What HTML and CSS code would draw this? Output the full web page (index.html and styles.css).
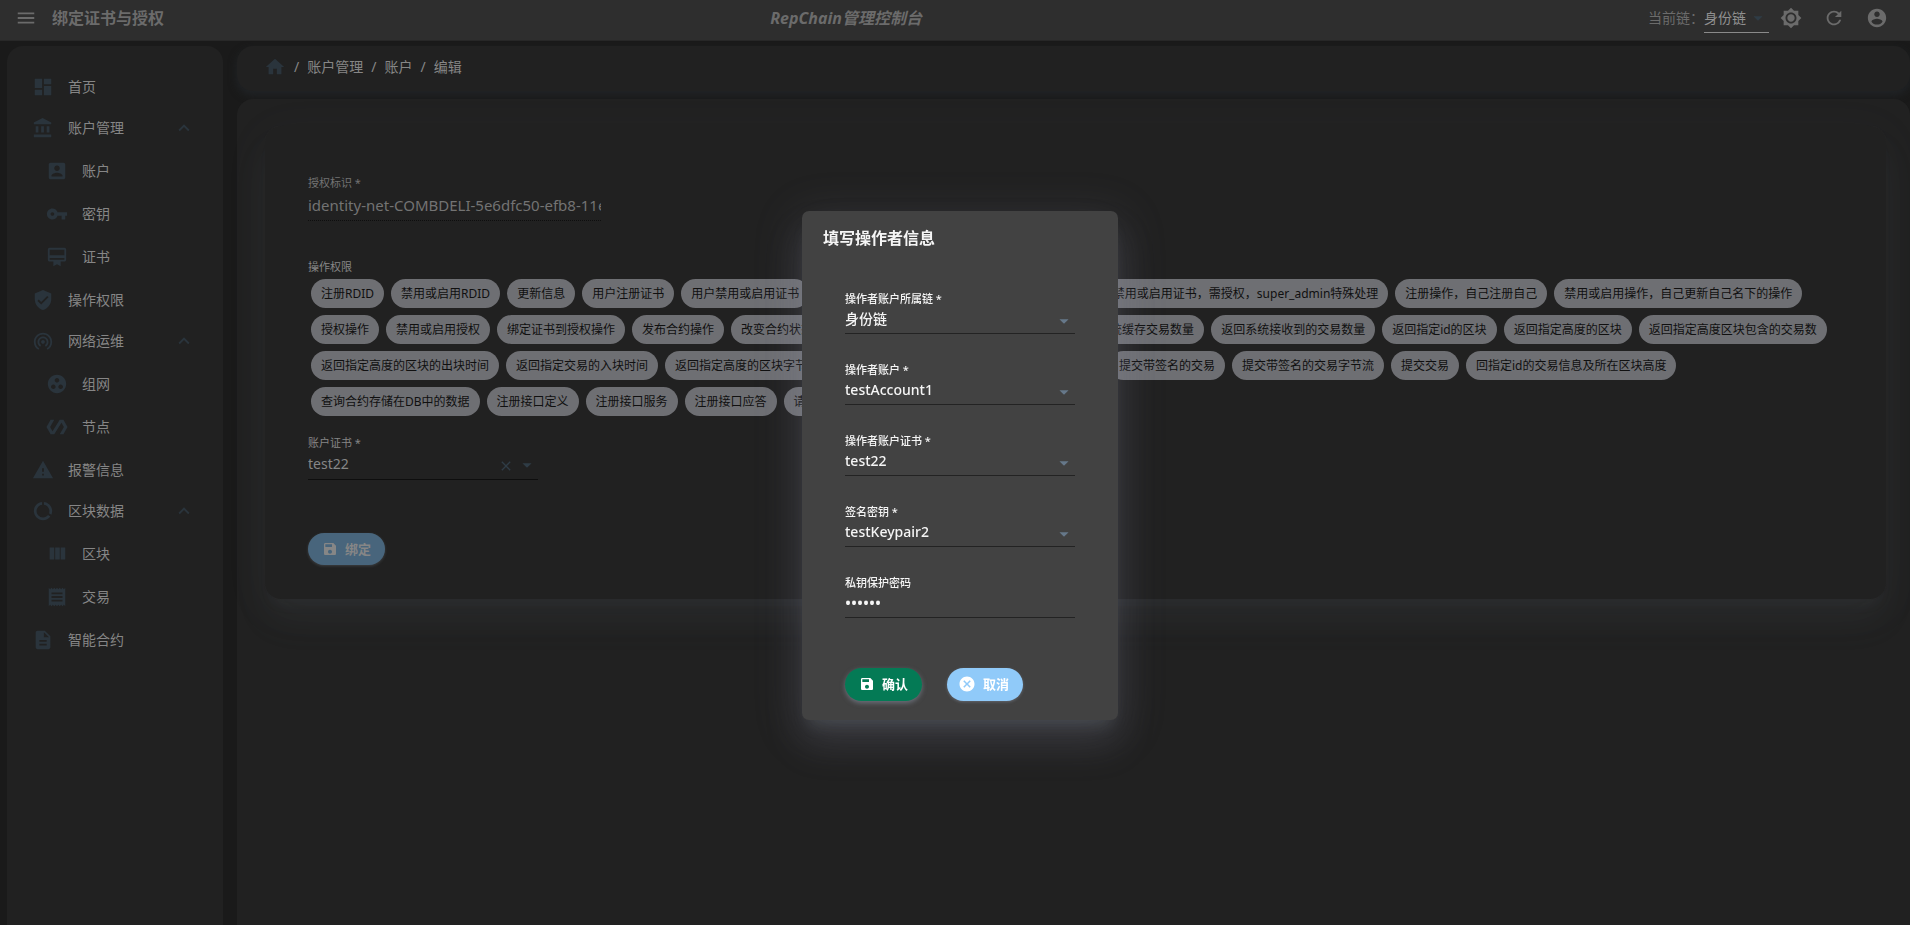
FILE: index.html
```html
<!DOCTYPE html>
<html lang="zh-CN">
<head>
<meta charset="utf-8">
<title>RepChain管理控制台</title>
<link rel="stylesheet" href="styles.css">
</head>
<body>
<svg class="sprite" aria-hidden="true">
  <symbol id="menu" viewBox="0 0 24 24"><path d="M3 18h18v-2H3v2zm0-5h18v-2H3v2zm0-7v2h18V6H3z"/></symbol>
  <symbol id="dashboard" viewBox="0 0 24 24"><path d="M3 13h8V3H3v10zm0 8h8v-6H3v6zm10 0h8V11h-8v10zm0-18v6h8V3h-8z"/></symbol>
  <symbol id="bank" viewBox="0 0 24 24"><path d="M4 10v7h3v-7H4zm6 0v7h3v-7h-3zM2 22h19v-3H2v3zm14-12v7h3v-7h-3zm-4.500-9L2 6v2h19V6l-9.500-5z"/></symbol>
  <symbol id="account-box" viewBox="0 0 24 24"><path d="M3 5v14c0 1.100.890 2 2 2h14c1.100 0 2-.900 2-2V5c0-1.100-.900-2-2-2H5c-1.110 0-2 .900-2 2zm12 4c0 1.660-1.340 3-3 3s-3-1.340-3-3 1.340-3 3-3 3 1.340 3 3zm-9 8c0-2 4-3.100 6-3.100s6 1.100 6 3.100v1H6v-1z"/></symbol>
  <symbol id="key" viewBox="0 0 24 24"><path d="M12.650 10C11.830 7.670 9.610 6 7 6c-3.310 0-6 2.690-6 6s2.690 6 6 6c2.610 0 4.830-1.670 5.650-4H17v4h4v-4h2v-4H12.650zM7 14c-1.100 0-2-.900-2-2s.900-2 2-2 2 .900 2 2-.900 2-2 2z"/></symbol>
  <symbol id="membership" viewBox="0 0 24 24"><path d="M20 2H4c-1.110 0-2 .890-2 2v11c0 1.110.890 2 2 2h4v5l4-2 4 2v-5h4c1.110 0 2-.890 2-2V4c0-1.110-.890-2-2-2zm0 13H4v-2h16v2zm0-5H4V4h16v6z"/></symbol>
  <symbol id="shield" viewBox="0 0 24 24"><path d="M12 1L3 5v6c0 5.550 3.840 10.740 9 12 5.160-1.260 9-6.450 9-12V5l-9-4zm-2 16l-4-4 1.410-1.410L10 14.170l6.590-6.590L18 9l-8 8z"/></symbol>
  <symbol id="tethering" viewBox="0 0 24 24"><path d="M12 11c-1.100 0-2 .900-2 2s.900 2 2 2 2-.900 2-2-.900-2-2-2zm6 2c0-3.310-2.690-6-6-6s-6 2.690-6 6c0 2.220 1.210 4.150 3 5.190l1-1.740c-1.190-.700-2-1.970-2-3.450 0-2.210 1.790-4 4-4s4 1.790 4 4c0 1.480-.810 2.750-2 3.450l1 1.740c1.790-1.040 3-2.970 3-5.190zM12 3C6.480 3 2 7.480 2 13c0 3.700 2.010 6.920 4.990 8.650l1-1.730C5.610 18.530 4 15.960 4 13c0-4.420 3.580-8 8-8s8 3.580 8 8c0 2.960-1.610 5.530-4 6.920l1 1.730c2.990-1.730 5-4.950 5-8.650 0-5.520-4.480-10-10-10z"/></symbol>
  <symbol id="group-work" viewBox="0 0 24 24"><path d="M12 2C6.480 2 2 6.480 2 12s4.480 10 10 10 10-4.480 10-10S17.520 2 12 2zM8 17.500c-1.380 0-2.500-1.120-2.500-2.500s1.120-2.500 2.500-2.500 2.500 1.120 2.500 2.500-1.120 2.500-2.500 2.500zM9.500 8c0-1.380 1.120-2.500 2.500-2.500s2.500 1.120 2.500 2.500-1.120 2.500-2.500 2.500S9.500 9.380 9.500 8zm6.500 9.500c-1.380 0-2.500-1.120-2.500-2.500s1.120-2.500 2.500-2.500 2.500 1.120 2.500 2.500-1.120 2.500-2.500 2.500z"/></symbol>
  <symbol id="polymer" viewBox="0 0 24 24"><path d="M19 4h-4L7.110 16.630 4.500 12 9 4H5L.500 12 5 20h4l7.890-12.630L19.500 12 15 20h4l4.500-8z"/></symbol>
  <symbol id="warning" viewBox="0 0 24 24"><path d="M1 21h22L12 2 1 21zm12-3h-2v-2h2v2zm0-4h-2v-4h2v4z"/></symbol>
  <symbol id="data-usage" viewBox="0 0 24 24"><path d="M13 2.050v3.030c3.390.490 6 3.390 6 6.920 0 .900-.180 1.750-.480 2.540l2.600 1.530c.560-1.240.880-2.620.880-4.070 0-5.180-3.950-9.450-9-9.950zM12 19c-3.870 0-7-3.130-7-7 0-3.530 2.610-6.430 6-6.920V2.050c-5.060.500-9 4.760-9 9.950 0 5.520 4.470 10 9.990 10 3.310 0 6.240-1.610 8.060-4.090l-2.600-1.530C16.170 17.980 14.210 19 12 19z"/></symbol>
  <symbol id="columns" viewBox="0 0 24 24"><path d="M10 18h5V5h-5v13zm-6 0h5V5H4v13zM16 5v13h5V5h-5z"/></symbol>
  <symbol id="receipt" viewBox="0 0 24 24"><path d="M18 17H6v-2h12v2zm0-4H6v-2h12v2zm0-4H6V7h12v2zM3 22l1.500-1.500L6 22l1.500-1.500L9 22l1.500-1.500L12 22l1.500-1.500L15 22l1.500-1.500L18 22l1.500-1.500L21 22V2l-1.500 1.500L18 2l-1.500 1.500L15 2l-1.500 1.500L12 2l-1.500 1.500L9 2 7.500 3.500 6 2 4.500 3.500 3 2v20z"/></symbol>
  <symbol id="description" viewBox="0 0 24 24"><path d="M14 2H6c-1.100 0-1.990.900-1.990 2L4 20c0 1.100.890 2 1.990 2H18c1.100 0 2-.900 2-2V8l-6-6zm2 16H8v-2h8v2zm0-4H8v-2h8v2zm-3-5V3.500L18.500 9H13z"/></symbol>
  <symbol id="expand-less" viewBox="0 0 24 24"><path d="M12 8l-6 6 1.410 1.410L12 10.830l4.590 4.580L18 14z"/></symbol>
  <symbol id="home" viewBox="0 0 24 24"><path d="M10 20v-6h4v6h5v-8h3L12 3 2 12h3v8z"/></symbol>
  <symbol id="drop-down" viewBox="0 0 24 24"><path d="M7 10l5 5 5-5z"/></symbol>
  <symbol id="brightness" viewBox="0 0 24 24"><path d="M20 8.690V4h-4.690L12 .690 8.690 4H4v4.690L.690 12 4 15.310V20h4.690L12 23.310 15.310 20H20v-4.690L23.310 12 20 8.690zM12 18c-3.310 0-6-2.690-6-6s2.690-6 6-6 6 2.690 6 6-2.690 6-6 6zm0-10c-2.210 0-4 1.790-4 4s1.790 4 4 4 4-1.790 4-4-1.790-4-4-4z"/></symbol>
  <symbol id="refresh" viewBox="0 0 24 24"><path d="M17.650 6.350C16.200 4.900 14.210 4 12 4c-4.420 0-7.990 3.580-7.990 8s3.570 8 7.990 8c3.730 0 6.840-2.550 7.730-6h-2.080c-.820 2.330-3.040 4-5.650 4-3.310 0-6-2.690-6-6s2.690-6 6-6c1.660 0 3.140.690 4.220 1.780L13 11h7V4l-2.350 2.350z"/></symbol>
  <symbol id="account-circle" viewBox="0 0 24 24"><path d="M12 2C6.480 2 2 6.480 2 12s4.480 10 10 10 10-4.480 10-10S17.520 2 12 2zm0 3c1.660 0 3 1.340 3 3s-1.340 3-3 3-3-1.340-3-3 1.340-3 3-3zm0 14.200c-2.500 0-4.710-1.280-6-3.220.030-1.990 4-3.080 6-3.080 1.990 0 5.970 1.090 6 3.080-1.290 1.940-3.500 3.220-6 3.220z"/></symbol>
  <symbol id="save" viewBox="0 0 24 24"><path d="M17 3H5c-1.110 0-2 .900-2 2v14c0 1.100.890 2 2 2h14c1.100 0 2-.900 2-2V7l-4-4zm-5 16c-1.660 0-3-1.340-3-3s1.340-3 3-3 3 1.340 3 3-1.340 3-3 3zm3-10H5V5h10v4z"/></symbol>
  <symbol id="cancel" viewBox="0 0 24 24"><path d="M12 2C6.470 2 2 6.470 2 12s4.470 10 10 10 10-4.470 10-10S17.530 2 12 2zm5 13.590L15.590 17 12 13.410 8.410 17 7 15.590 10.590 12 7 8.410 8.410 7 12 10.590 15.590 7 17 8.410 13.410 12 17 15.590z"/></symbol>
  <symbol id="close" viewBox="0 0 24 24"><path d="M19 6.410L17.590 5 12 10.590 6.410 5 5 6.410 10.590 12 5 17.590 6.410 19 12 13.410 17.590 19 19 17.590 13.410 12z"/></symbol>
</svg>

<div class="app">
  <header class="appbar">
    <div class="appbar-left">
      <button class="icon-button" type="button" aria-label="菜单"><svg class="icon"><use href="#menu"/></svg></button>
      <h1 class="page-title">绑定证书与授权</h1>
    </div>
    <div class="appbar-right">
      <em class="brand">RepChain管理控制台</em>
      <div class="appbar-tools">
        <div class="chain">
          <label class="chain-label" for="chain">当前链：</label>
          <div class="select-box chain-box">
            <select class="control chain-select" id="chain"><option>身份链</option></select>
            <svg class="icon arrow chain-arrow"><use href="#drop-down"/></svg>
          </div>
        </div>
        <button class="icon-button" type="button" aria-label="主题"><svg class="icon"><use href="#brightness"/></svg></button>
        <button class="icon-button" type="button" aria-label="刷新"><svg class="icon"><use href="#refresh"/></svg></button>
        <button class="icon-button" type="button" aria-label="用户"><svg class="icon"><use href="#account-circle"/></svg></button>
      </div>
    </div>
  </header>

  <div class="body">
    <nav class="sidebar" aria-label="主菜单">
      <a class="nav-item" href="#"><svg class="icon"><use href="#dashboard"/></svg>首页</a>
      <a class="nav-item nav-group" href="#"><svg class="icon"><use href="#bank"/></svg>账户管理<svg class="icon chevron"><use href="#expand-less"/></svg></a>
      <div class="nav-children">
        <a class="nav-item" href="#"><svg class="icon"><use href="#account-box"/></svg>账户</a>
        <a class="nav-item" href="#"><svg class="icon"><use href="#key"/></svg>密钥</a>
        <a class="nav-item" href="#"><svg class="icon"><use href="#membership"/></svg>证书</a>
      </div>
      <a class="nav-item" href="#"><svg class="icon"><use href="#shield"/></svg>操作权限</a>
      <a class="nav-item nav-group" href="#"><svg class="icon"><use href="#tethering"/></svg>网络运维<svg class="icon chevron"><use href="#expand-less"/></svg></a>
      <div class="nav-children">
        <a class="nav-item" href="#"><svg class="icon"><use href="#group-work"/></svg>组网</a>
        <a class="nav-item" href="#"><svg class="icon"><use href="#polymer"/></svg>节点</a>
      </div>
      <a class="nav-item" href="#"><svg class="icon"><use href="#warning"/></svg>报警信息</a>
      <a class="nav-item nav-group" href="#"><svg class="icon"><use href="#data-usage"/></svg>区块数据<svg class="icon chevron"><use href="#expand-less"/></svg></a>
      <div class="nav-children">
        <a class="nav-item" href="#"><svg class="icon"><use href="#columns"/></svg>区块</a>
        <a class="nav-item" href="#"><svg class="icon"><use href="#receipt"/></svg>交易</a>
      </div>
      <a class="nav-item" href="#"><svg class="icon"><use href="#description"/></svg>智能合约</a>
    </nav>

    <main class="main">
      <nav class="breadcrumb" aria-label="路径">
        <a class="crumb crumb-home" href="#" aria-label="首页"><svg class="icon"><use href="#home"/></svg></a>
        <span>/</span><a class="crumb" href="#">账户管理</a>
        <span>/</span><a class="crumb" href="#">账户</a>
        <span>/</span><a class="crumb" href="#">编辑</a>
      </nav>

      <section class="content">
        <form class="card">
          <div class="field field-id">
            <label class="label" for="auth-id">授权标识 *</label>
            <input class="control" id="auth-id" type="text" disabled value="identity-net-COMBDELI-5e6dfc50-efb8-11ed-957b">
          </div>
          <div class="permissions">
            <h2 class="label">操作权限</h2>
            <ul class="chips">
              <li class="chip">注册RDID</li><li class="chip">禁用或启用RDID</li><li class="chip">更新信息</li><li class="chip">用户注册证书</li><li class="chip">用户禁用或启用证书</li><li class="chip">注册证书，需授权，super_admin 特殊处理</li><li class="chip">用户 禁用或启用证书，需授权，super_admin特殊处理</li><li class="chip">注册操作，自己注册自己</li><li class="chip">禁用或启用操作，自己更新自己名下的操作</li>
              <li class="chip">授权操作</li><li class="chip">禁用或启用授权</li><li class="chip">绑定证书到授权操作</li><li class="chip">发布合约操作</li><li class="chip">改变合约状态</li><li class="chip">返回当前链信息</li><li class="chip">返回组网节点数量</li><li class="chip">返回系统缓存交易数量</li><li class="chip">返回系统接收到的交易数量</li><li class="chip">返回指定id的区块</li><li class="chip">返回指定高度的区块</li><li class="chip">返回指定高度区块包含的交易数</li>
              <li class="chip">返回指定高度的区块的出块时间</li><li class="chip">返回指定交易的入块时间</li><li class="chip">返回指定高度的区块字节流</li><li class="chip">返回时刻t的交易</li><li class="chip">返回指定id的交易字节流</li><li class="chip">提交带签名的交易</li><li class="chip">提交带签名的交易字节流</li><li class="chip">提交交易</li><li class="chip">回指定id的交易信息及所在区块高度</li>
              <li class="chip">查询合约存储在DB中的数据</li><li class="chip">注册接口定义</li><li class="chip">注册接口服务</li><li class="chip">注册接口应答</li><li class="chip">请求接口服务</li>
            </ul>
          </div>
          <div class="field field-cert">
            <label class="label" for="cert">账户证书 *</label>
            <div class="select-box">
              <select class="control" id="cert"><option>test22</option></select>
              <button class="clear" type="button" aria-label="清除"><svg class="icon"><use href="#close"/></svg></button>
              <svg class="icon arrow"><use href="#drop-down"/></svg>
            </div>
          </div>
          <button class="pill pill-bind" type="button"><svg class="icon"><use href="#save"/></svg>绑定</button>
        </form>
      </section>
    </main>
  </div>
</div>

<div class="overlay">
  <form class="dialog" role="dialog" aria-labelledby="dialog-title">
    <h2 class="dialog-title" id="dialog-title">填写操作者信息</h2>
    <div class="dialog-fields">
      <div class="field">
        <label class="label" for="op-chain">操作者账户所属链 *</label>
        <div class="select-box"><select class="control" id="op-chain"><option>身份链</option></select><svg class="icon arrow"><use href="#drop-down"/></svg></div>
      </div>
      <div class="field">
        <label class="label" for="op-account">操作者账户 *</label>
        <div class="select-box"><select class="control" id="op-account"><option>testAccount1</option></select><svg class="icon arrow"><use href="#drop-down"/></svg></div>
      </div>
      <div class="field">
        <label class="label" for="op-cert">操作者账户证书 *</label>
        <div class="select-box"><select class="control" id="op-cert"><option>test22</option></select><svg class="icon arrow"><use href="#drop-down"/></svg></div>
      </div>
      <div class="field">
        <label class="label" for="op-key">签名密钥 *</label>
        <div class="select-box"><select class="control" id="op-key"><option>testKeypair2</option></select><svg class="icon arrow"><use href="#drop-down"/></svg></div>
      </div>
      <div class="field">
        <label class="label" for="op-password">私钥保护密码</label>
        <input class="control password" id="op-password" type="password" value="123456">
      </div>
    </div>
    <div class="dialog-actions">
      <button class="pill pill-confirm" type="button"><svg class="icon"><use href="#save"/></svg>确认</button>
      <button class="pill pill-cancel" type="button"><svg class="icon"><use href="#cancel"/></svg>取消</button>
    </div>
  </form>
</div>
</body>
</html>
```
FILE: styles.css
```css
* { box-sizing: border-box; }

body {
  margin: 0;
  background: #1a1a1a;
  color: #868686;
  font: 14px/20px "Noto Sans", "Noto Sans CJK SC", sans-serif;
}

h1, h2, ul { margin: 0; padding: 0; }
a { color: inherit; text-decoration: none; }
button { border: 0; padding: 0; font: inherit; color: inherit; background: none; }

.sprite { display: none; }
.icon { flex: none; width: 22px; height: 22px; fill: currentColor; }

.app { display: flex; flex-direction: column; min-height: 100vh; overflow: hidden; }

/* form controls */
.field { width: 230px; }
.label { display: block; font-size: 11px; line-height: 16px; font-weight: 400; }
.control {
  display: block;
  width: 100%;
  height: 27px;
  padding: 0 0 2px;
  border: 0;
  border-bottom: 1px solid #0e0e0e;
  border-radius: 0;
  outline: 0;
  appearance: none;
  background: none;
  color: inherit;
  font: inherit;
}
.select-box { position: relative; }
.arrow { position: absolute; right: 0; top: 3px; color: #2f3c46; pointer-events: none; }
.clear { position: absolute; right: 24px; top: 7px; color: #2f3c46; }
.clear .icon { display: block; width: 16px; height: 16px; }

/* top bar */
.appbar {
  display: grid;
  grid-template-columns: 2fr 3fr;
  height: 41px;
  padding: 0 22px 4px 15px;
  background: #2e2e2e;
  border-bottom: 1px solid #282828;
  color: #6b6b6b;
}
.appbar-left, .appbar-right, .appbar-tools, .chain { display: flex; align-items: center; }
.appbar-left { gap: 15px; }
.appbar-right { justify-content: space-between; padding-left: 6px; }
.appbar-tools { gap: 21px; }
.icon-button { display: flex; }
.page-title { font-size: 16px; font-weight: 700; }
.brand { font-size: 16px; font-weight: 700; }
.chain { margin-right: -10px; }
.chain-box { width: 65px; }
.chain-select { height: 29px; padding: 0; color: #909090; border-bottom: 1px solid #8a8a8a; }

/* layout */
.body { flex: 1; display: grid; grid-template-columns: 216px 1fr; gap: 14px; padding: 5px 0 0 7px; }
.main { display: flex; flex-direction: column; gap: 8px; min-width: 0; }
.sidebar, .breadcrumb, .content { background: #212121; }

/* sidebar */
.sidebar { padding: 19px 28px 0 25px; border-radius: 16px 16px 0 0; }
.nav-item { display: flex; align-items: center; gap: 14px; height: 43px; }
.nav-group { height: 39px; }
.nav-item .icon { color: #2a343c; }
.nav-children { padding: 2px 0 0 14px; }
.chevron { margin-left: auto; }

/* breadcrumb */
.breadcrumb { display: flex; align-items: center; gap: 8px; height: 45px; padding: 0 27px 3px; border-radius: 16px; box-shadow: 0 4px 8px #212427; }
.crumb-home { display: flex; color: #2a343c; }

/* content */
.content { flex: 1; padding: 27px 24px 0 28px; border-radius: 16px 16px 0 0; }
.card {
  padding: 49px 43px 34px;
  border-radius: 16px;
  background: #212121;
  box-shadow: 0 0 1px #2c2c2c, 0 11px 15px -7px rgba(150, 170, 180, .06), 0 24px 38px 3px rgba(150, 170, 180, .04), 0 9px 46px 8px rgba(150, 170, 180, .03);
}

.field-id { width: 293px; color: #737373; }
.field-id .control { height: 30px; font-size: 15px; border-bottom: 1px dotted #0e0e0e; }
.permissions { margin-top: 38px; }
.chips { display: flex; flex-wrap: wrap; gap: 7px; padding: 4px 0 0 3px; list-style: none; }
.chip { height: 29px; padding: 0 10px; border-radius: 15px; background: #6e6f73; color: #101010; font-size: 12px; line-height: 29px; white-space: nowrap; }
.field-cert { margin-top: 19px; }
.field-cert .control { height: 29px; }

.pill { display: flex; align-items: center; gap: 7px; height: 33px; padding: 0 14px; border-radius: 17px; font-size: 13px; font-weight: 700; color: #fff; }
.pill .icon { width: 16px; height: 16px; }
.pill-bind { margin-top: 53px; height: 32px; background: #48657c; color: #868686; box-shadow: 0 1px 3px rgba(130, 140, 150, .3); }
.pill-confirm { background: #047a55; box-shadow: 0 2px 5px rgba(150, 160, 180, .5); }
.pill-cancel { padding: 0 14px 0 11px; background: #90caf9; box-shadow: 0 1px 3px rgba(150, 160, 180, .4); }
.pill-cancel .icon { width: 18px; height: 18px; }

/* dialog */
.overlay { position: fixed; inset: 0; display: flex; align-items: center; justify-content: center; padding: 5px 0 0 10px; }
.dialog {
  width: 316px;
  padding: 16px 20px 19px 21px;
  border-radius: 7px;
  background: #424242;
  color: #f5f5f5;
  box-shadow: 0 11px 15px -7px rgba(144, 164, 174, .2), 0 24px 38px 3px rgba(144, 150, 170, .12), 0 9px 46px 8px rgba(144, 150, 170, .12);
}
.dialog-title { font-size: 16px; line-height: 22px; font-weight: 700; }
.dialog-fields { display: flex; flex-direction: column; gap: 28px; padding: 42px 22px 50px; font-weight: 500; }
.dialog .label { font-weight: 500; }
.dialog .control { border-bottom-color: #232323; }
.dialog .arrow { color: #66788a; }
.dialog .password { font-size: 16px; }
.dialog-actions { display: flex; gap: 25px; padding: 0 22px; }
```
